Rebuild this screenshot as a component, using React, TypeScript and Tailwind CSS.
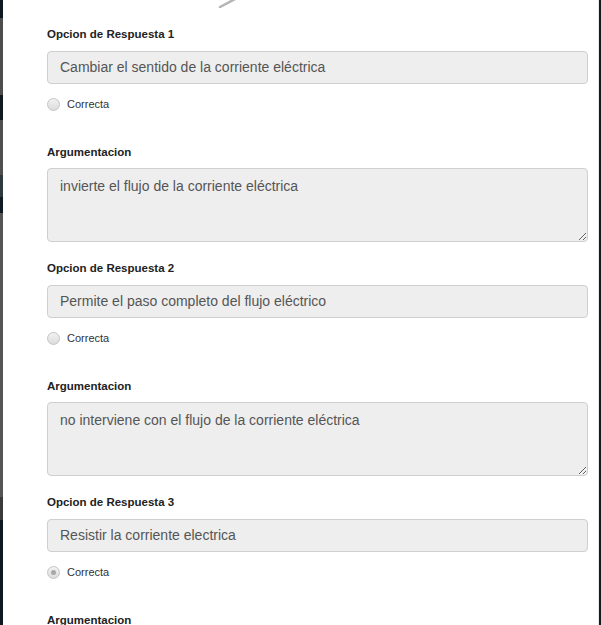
import React from 'react';

type Option = {
  answer: string;
  argument: string;
  checked: boolean;
};

const options: Option[] = [
  {
    answer: 'Cambiar el sentido de la corriente eléctrica',
    argument: 'invierte el flujo de la corriente eléctrica',
    checked: false,
  },
  {
    answer: 'Permite el paso completo del flujo eléctrico',
    argument: 'no interviene con el flujo de la corriente eléctrica',
    checked: false,
  },
  {
    answer: 'Resistir la corriente electrica',
    argument: '',
    checked: true,
  },
];

const Radio = ({ checked }: { checked: boolean }) => (
  <span className="flex h-[13px] w-[13px] items-center justify-center rounded-full border border-[#c4c4c4] bg-gradient-to-b from-[#f2f2f2] to-[#dcdcdc]">
    {checked && <span className="h-[5px] w-[5px] rounded-full bg-[#a8a8a8]" />}
  </span>
);

const OptionBlock = ({ option, index }: { option: Option; index: number }) => (
  <div className="flex flex-col">
    <div className="mb-[9px] h-[15px] text-[11.5px] font-bold leading-[15px] text-[#222]">
      Opcion de Respuesta {index + 1}
    </div>
    <div className="flex h-[33px] items-center rounded-[4px] border border-[#cfcfcf] bg-[#eeeeee] px-[12px] text-[14px] text-[#555]">
      {option.answer}
    </div>
    <label className="mt-[14px] flex h-[13px] items-center gap-[7px] text-[11px] text-[#333]">
      <Radio checked={option.checked} />
      Correcta
    </label>
    <div className="mb-[8px] mt-[34px] h-[15px] text-[11.5px] font-bold leading-[15px] text-[#222]">
      Argumentacion
    </div>
    <textarea
      readOnly
      value={option.argument}
      className="mb-[19px] h-[74px] rounded-[4px] border border-[#cfcfcf] bg-[#eeeeee] px-[12px] py-[7px] text-[14px] leading-5 text-[#555] outline-none"
    />
  </div>
);

export default function App() {
  return (
    <div
      className="flex h-[625px] w-[601px] overflow-hidden bg-[#1b232a]"
      style={{ fontFamily: '"Liberation Sans", Arial, sans-serif' }}
    >
      {/* backdrop strip on the left */}
      <div className="flex w-[3px] shrink-0 flex-col">
        <div className="h-[18px] bg-[#0d1820]" />
        <div className="h-[77px] bg-[#4d4d4d]" />
        <div className="h-[25px] bg-[#101820]" />
        <div className="h-[55px] bg-[#4f4f4f]" />
        <div className="h-[22px] bg-[#2c3a3f]" />
        <div className="h-[16px] bg-[#0f1a22]" />
        <div className="h-[284px] bg-[#555555]" />
        <div className="h-[23px] bg-[#3a3a3a]" />
        <div className="flex-1 bg-[#0e1820]" />
      </div>

      <div className="relative flex-1 overflow-hidden bg-white pl-[44px] pr-[10px] pt-[27px]">
        <svg className="absolute left-[214px] top-0" width="22" height="8" viewBox="0 0 22 8">
          <path d="M3 7 L20 -2" stroke="#b5b5b5" strokeWidth="2.5" strokeLinecap="round" fill="none" />
        </svg>
        {options.map((option, i) => (
          <OptionBlock key={i} option={option} index={i} />
        ))}
      </div>

      {/* backdrop strip on the right */}
      <div className="w-[3px] shrink-0 border-l border-[#e8e8e8] bg-[#141c22]" />
    </div>
  );
}
